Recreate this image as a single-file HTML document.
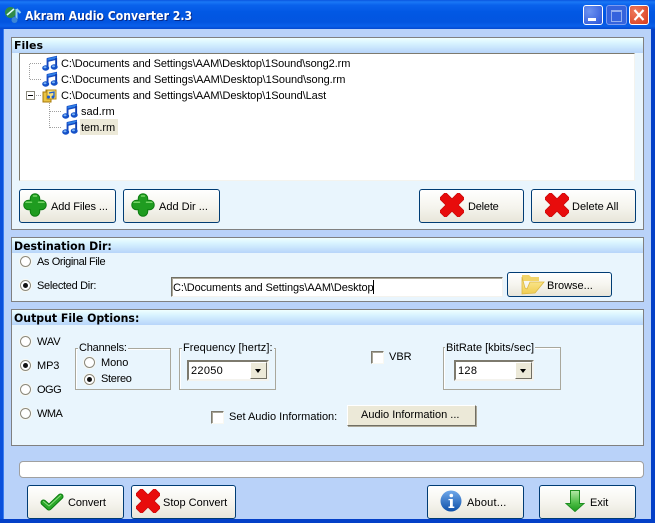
<!DOCTYPE html>
<html><head><meta charset="utf-8"><style>
html,body{margin:0;padding:0;background:#0a55e3}
#w{position:relative;width:655px;height:523px;overflow:hidden;background:#b9d2f9;font-family:"Liberation Sans",sans-serif;font-size:11px;color:#000}
#w div,#w span,#w svg{position:absolute}
.t{white-space:nowrap;line-height:13px;height:13px;margin-top:1px}
.panel{left:11px;width:631px;background:#e9f5fd;border:1px solid #808080}
.hd{left:0;top:0;width:631px;height:15px;background:linear-gradient(#f0ffff,#d8f3ff 35%,#b7d4fa)}
.hdt{left:2px;top:1px;font-weight:bold;font-family:"DejaVu Sans",sans-serif;font-size:11.5px;line-height:14px;white-space:nowrap;transform-origin:0 0;transform:scaleX(.95)}
.btn{box-sizing:border-box;height:34px;border:1px solid #003c74;border-radius:3px;background:linear-gradient(#fff,#f6f5ef 50%,#e8e6da)}
.rad{width:11px;height:11px;border-radius:50%;background:#fff;border:1px solid #8a887c;box-sizing:border-box;box-shadow:0 0 0 1px #f8f8f2}
.rad.on:after{content:"";position:absolute;left:2px;top:2px;width:5px;height:5px;border-radius:50%;background:#111}
.chk{width:11px;height:11px;background:#fff;border:1px solid;border-color:#7d7a6e #f8f8f2 #f8f8f2 #7d7a6e;box-shadow:inset 1px 1px 0 #a8a598}
.grp{border:1px solid #a9a79c;box-shadow:inset 1px 1px 0 #fff}
.lab{background:#e9f5fd;padding:0 1px}
.sel{background:#fff;border:2px solid;border-color:#7d7a6e #f4f3ee #f4f3ee #7d7a6e;box-sizing:border-box;height:21px}
.arr{right:0;top:0;width:17px;height:17px;background:#ece9d8;border:1px solid;border-color:#fff #716f64 #716f64 #fff;box-sizing:border-box}
.arr:after{content:"";position:absolute;left:4px;top:6px;border:3.5px solid transparent;border-top:4px solid #000;border-bottom:0}
.n{width:16px;height:16px}
</style></head><body><div id="w">
<svg width="0" height="0" style="left:0;top:0"><defs>
<symbol id="note" viewBox="0 0 16 16"><path d="M5 3 15 .8v4L6.500 6.800V13H4.600V3.500z" fill="#1448c0"/><path d="M5.500 3.500 14.500 1.500v2L5.500 5.500z" fill="#2f80e8"/><path d="M13.200 3h1.900v9h-1.900z" fill="#0f3fb0"/><ellipse cx="3.700" cy="13" rx="3.500" ry="2.700" fill="#1450c8"/><ellipse cx="12.200" cy="12" rx="3.500" ry="2.700" fill="#1450c8"/><ellipse cx="3" cy="12.300" rx="1.500" ry="1" fill="#7ab4f4"/><ellipse cx="11.500" cy="11.300" rx="1.500" ry="1" fill="#7ab4f4"/></symbol>
<symbol id="plus" viewBox="0 0 24 24"><path d="M12 5.500v13M5.500 12h13" fill="none" stroke="#0c7c10" stroke-width="10.500" stroke-linecap="round"/><path d="M12 5.500v13M5.500 12h13" fill="none" stroke="#1f9c20" stroke-width="8.500" stroke-linecap="round"/><path d="M10.500 3h3M3 9.300h5.500M15.500 9.300H21" fill="none" stroke="#74d466" stroke-width="1.500" stroke-linecap="round"/></symbol>
<symbol id="x" viewBox="0 0 24 24"><path d="M5.500 5.500 18.500 18.500M18.500 5.500 5.500 18.500" fill="none" stroke="#c80808" stroke-width="9.500" stroke-linecap="square"/><path d="M5.500 5.500 18.500 18.500M18.500 5.500 5.500 18.500" fill="none" stroke="#e80c0c" stroke-width="8" stroke-linecap="square"/></symbol>
</defs></svg>

<!-- title bar -->
<div style="left:0;top:0;width:655px;height:29px;background:linear-gradient(#0a55e0 0,#1a78f6 2px,#0a62ec 5px,#0258e4 12px,#0355e0 22px,#0a60ea 26px,#0448d0)"></div>
<div style="left:0;top:29px;width:3px;height:494px;background:#0a50dc"></div>
<div style="left:3px;top:29px;width:1px;height:490px;background:#3a7cf0"></div>
<div style="left:651px;top:29px;width:4px;height:494px;background:#0440c8"></div>
<div style="left:0;top:519px;width:655px;height:4px;background:#0440c8"></div>
<svg style="left:4px;top:6px" width="18" height="18" viewBox="0 0 18 18"><circle cx="6.500" cy="6.500" r="5.500" fill="#2f8a48"/><path d="M3 9 10 3" stroke="#dff" stroke-width="1.500"/><path d="M12.500 3v10" stroke="#8fd0f0" stroke-width="2"/><path d="M12.500 3l4 4" stroke="#8fd0f0" stroke-width="2"/><ellipse cx="10.500" cy="14" rx="3" ry="3" fill="#3c86d6"/></svg>
<div style="left:25px;top:9px;height:15px;line-height:15px;color:#062a8a;font:bold 12px 'DejaVu Sans',sans-serif;white-space:nowrap;transform-origin:0 0;transform:translate(1px,1px) scaleX(.91)">Akram Audio Converter 2.3</div>
<div style="left:25px;top:9px;height:15px;line-height:15px;color:#fff;font:bold 12px 'DejaVu Sans',sans-serif;white-space:nowrap;transform-origin:0 0;transform:scaleX(.91)">Akram Audio Converter 2.3</div>
<div style="left:583px;top:5px;width:20px;height:20px;box-sizing:border-box;border:1px solid #fff;border-radius:3px;background:radial-gradient(circle at 30% 30%,#6d93f0,#2a54d8)"></div>
<div style="left:588px;top:18px;width:8px;height:3px;background:#fff"></div>
<div style="left:606px;top:5px;width:21px;height:20px;box-sizing:border-box;border:1px solid #7d9cf0;border-radius:3px;background:#3563dd"></div>
<div style="left:611px;top:10px;width:9px;height:9px;border:1px solid #92aef0;border-top:2px solid #92aef0"></div>
<div style="left:629px;top:5px;width:20px;height:20px;box-sizing:border-box;border:1px solid #fff;border-radius:3px;background:radial-gradient(circle at 30% 30%,#ee7a5c,#d83a1c)"></div>
<svg style="left:633px;top:9px" width="12" height="12" viewBox="0 0 12 12"><path d="M1.500 1 10.500 11M10.500 1 1.500 11" stroke="#fff" stroke-width="2.200"/></svg>

<!-- Files -->
<div class="panel" style="top:37px;height:191px">
 <div class="hd"></div><div class="hdt" style="font-size:11px;top:1px;transform:none">Files</div>
</div>
<div style="left:19px;top:53px;width:614px;height:126px;background:#fff;border:1px solid;border-color:#7d7a6e #f4f3ee #f4f3ee #7d7a6e"></div>
<svg style="left:20px;top:54px" width="70" height="85"><g stroke="#a0a0a0" stroke-dasharray="1 1" fill="none"><path d="M9.500 10V26M10 9.500H22M10 25.500H22"/><path d="M29.500 47V74M30 57.500H42M30 73.500H42"/><path d="M14 41.500H22"/></g></svg>
<div style="left:26px;top:91px;width:9px;height:9px;box-sizing:border-box;border:1px solid #8a887c;background:#fff"></div>
<div style="left:28px;top:95px;width:5px;height:1px;background:#000"></div>
<svg class="n" style="left:42px;top:55px"><use href="#note"/></svg>
<svg class="n" style="left:42px;top:71px"><use href="#note"/></svg>
<svg class="n" style="left:42px;top:87px" viewBox="0 0 16 16"><path d="M1 5h3V3h10v9H9v3H1z" fill="#e9c344" stroke="#a87a0a"/><path d="M5 3h9v9H5z" fill="#f6df7c" stroke="#b58a14"/><path d="M7 6l5-1v5" fill="none" stroke="#1c5cd0" stroke-width="1.300"/><circle cx="6.500" cy="10" r="1.500" fill="#1c5cd0"/><circle cx="11" cy="10" r="1.500" fill="#1c5cd0"/></svg>
<svg class="n" style="left:62px;top:103px"><use href="#note"/></svg>
<svg class="n" style="left:62px;top:119px"><use href="#note"/></svg>
<div class="t" style="left:61px;top:57px;letter-spacing:-.09px">C:\Documents and Settings\AAM\Desktop\1Sound\song2.rm</div>
<div class="t" style="left:61px;top:73px;letter-spacing:-.07px">C:\Documents and Settings\AAM\Desktop\1Sound\song.rm</div>
<div class="t" style="left:61px;top:89px;letter-spacing:-.08px">C:\Documents and Settings\AAM\Desktop\1Sound\Last</div>
<div class="t" style="left:81px;top:105px">sad.rm</div>
<div style="left:80px;top:119px;width:38px;height:16px;background:#ece9d8"></div>
<div class="t" style="left:81px;top:121px">tem.rm</div>

<div class="btn" style="left:19px;top:189px;width:97px"></div>
<svg style="left:23px;top:193px" width="24" height="24"><use href="#plus"/></svg>
<div class="t" style="left:51px;top:200px;letter-spacing:-.1px">Add Files ...</div>
<div class="btn" style="left:123px;top:189px;width:97px"></div>
<svg style="left:131px;top:193px" width="24" height="24"><use href="#plus"/></svg>
<div class="t" style="left:159px;top:200px">Add Dir ...</div>
<div class="btn" style="left:419px;top:189px;width:105px"></div>
<svg style="left:440px;top:193px" width="24" height="24"><use href="#x"/></svg>
<div class="t" style="left:468px;top:200px;letter-spacing:-.2px">Delete</div>
<div class="btn" style="left:531px;top:189px;width:105px"></div>
<svg style="left:545px;top:193px" width="24" height="24"><use href="#x"/></svg>
<div class="t" style="left:572px;top:200px">Delete All</div>

<!-- Destination -->
<div class="panel" style="top:237px;height:63px">
 <div class="hd"></div><div class="hdt">Destination Dir:</div>
</div>
<div class="rad" style="left:20px;top:256px"></div>
<div class="t" style="left:37px;top:255px;letter-spacing:-.4px">As Original File</div>
<div class="rad on" style="left:20px;top:280px"></div>
<div class="t" style="left:37px;top:279px;letter-spacing:-.3px">Selected Dir:</div>
<div style="left:171px;top:277px;width:332px;height:20px;box-sizing:border-box;background:#fff;border:1px solid;border-color:#716f64 #f4f3ee #f4f3ee #716f64;box-shadow:inset 1px 1px 0 #aca899"></div>
<div class="t" style="left:173px;top:281px;letter-spacing:-.1px">C:\Documents and Settings\AAM\Desktop</div>
<div style="left:373px;top:280px;width:1px;height:14px;background:#000"></div>
<div class="btn" style="left:507px;top:272px;width:105px;height:25px"></div>
<svg style="left:521px;top:274px" width="24" height="21" viewBox="0 0 24 21"><defs><linearGradient id="fo" x1="0" y1="0" x2="0" y2="1"><stop offset="0" stop-color="#fdeea0"/><stop offset="1" stop-color="#f0cc50"/></linearGradient></defs><path d="M1 1h7l2 2h8v4H1z" fill="#f2d468"/><path d="M1 3v17l13-1 9-11-14 0-3 7-2-1z" fill="url(#fo)" stroke="#dcb840" stroke-width=".8"/></svg>
<div class="t" style="left:547px;top:279px">Browse...</div>

<!-- Output -->
<div class="panel" style="top:309px;height:135px">
 <div class="hd"></div><div class="hdt">Output File Options:</div>
</div>
<div class="rad" style="left:20px;top:336px"></div><div class="t" style="left:37px;top:335px;letter-spacing:-.1px">WAV</div>
<div class="rad on" style="left:20px;top:360px"></div><div class="t" style="left:37px;top:359px;letter-spacing:-.1px">MP3</div>
<div class="rad" style="left:20px;top:384px"></div><div class="t" style="left:37px;top:383px;letter-spacing:-.5px">OGG</div>
<div class="rad" style="left:20px;top:408px"></div><div class="t" style="left:37px;top:407px;letter-spacing:-.5px">WMA</div>

<div class="grp" style="left:75px;top:348px;width:94px;height:40px"></div>
<div class="t lab" style="left:78px;top:341px;letter-spacing:-.2px">Channels:</div>
<div class="rad" style="left:84px;top:357px"></div><div class="t" style="left:101px;top:356px;letter-spacing:-.05px">Mono</div>
<div class="rad on" style="left:84px;top:374px"></div><div class="t" style="left:101px;top:372px;letter-spacing:-.3px">Stereo</div>

<div class="grp" style="left:179px;top:348px;width:95px;height:40px"></div>
<div class="t lab" style="left:182px;top:341px;letter-spacing:.05px">Frequency [hertz]:</div>
<div class="sel" style="left:187px;top:360px;width:82px"><div class="arr"></div></div>
<div class="t" style="left:191px;top:364px;letter-spacing:.3px">22050</div>

<div class="chk" style="left:371px;top:351px"></div>
<div class="t" style="left:389px;top:350px">VBR</div>

<div class="grp" style="left:443px;top:347px;width:116px;height:41px"></div>
<div class="t lab" style="left:445px;top:341px;letter-spacing:0">BitRate [kbits/sec]</div>
<div class="sel" style="left:454px;top:360px;width:80px"><div class="arr"></div></div>
<div class="t" style="left:458px;top:364px;letter-spacing:.3px">128</div>

<div class="chk" style="left:211px;top:411px"></div>
<div class="t" style="left:229px;top:410px">Set Audio Information:</div>
<div style="left:347px;top:405px;width:129px;height:21px;box-sizing:border-box;background:#ece9d8;border:1px solid;border-color:#fff #716f64 #716f64 #fff;box-shadow:1px 1px 0 #aca899"></div>
<div class="t" style="left:361px;top:408px">Audio Information ...</div>

<!-- Progress -->
<div style="left:19px;top:461px;width:625px;height:17px;box-sizing:border-box;background:#fff;border:1px solid #a0a0a0;border-radius:4px"></div>

<!-- Bottom buttons -->
<div class="btn" style="left:27px;top:485px;width:97px"></div>
<svg style="left:40px;top:493px" width="24" height="18" viewBox="0 0 24 18"><path d="M3.500 9.500 9 14.500 20.500 3.500" fill="none" stroke="#0a7a0e" stroke-width="6" stroke-linecap="round" stroke-linejoin="round"/><path d="M3.500 9.500 9 14.500 20.500 3.500" fill="none" stroke="#2aa82a" stroke-width="4" stroke-linecap="round" stroke-linejoin="round"/><path d="M3.500 8.500 9 13 20.500 2.500" fill="none" stroke="#8adc7c" stroke-width="1" stroke-linecap="round"/></svg>
<div class="t" style="left:68px;top:496px;letter-spacing:-.1px">Convert</div>
<div class="btn" style="left:131px;top:485px;width:105px"></div>
<svg style="left:136px;top:489px" width="24" height="24"><use href="#x"/></svg>
<div class="t" style="left:163px;top:496px">Stop Convert</div>
<div class="btn" style="left:427px;top:485px;width:97px"></div>
<svg style="left:440px;top:490px" width="22" height="22" viewBox="0 0 22 22"><defs><linearGradient id="ab" x1="0" y1="0" x2="0" y2="1"><stop offset="0" stop-color="#6fa8ea"/><stop offset="1" stop-color="#0e50a8"/></linearGradient></defs><circle cx="11" cy="11" r="10.500" fill="url(#ab)"/><circle cx="11.300" cy="5.500" r="1.800" fill="#fff"/><path d="M8.500 9h4.300v7.500h1.500V18H8.500v-1.500h1.500V10.300H8.500z" fill="#fff"/></svg>
<div class="t" style="left:467px;top:496px;letter-spacing:.2px">About...</div>
<div class="btn" style="left:539px;top:485px;width:97px"></div>
<svg style="left:565px;top:490px" width="20" height="22" viewBox="0 0 20 22"><defs><linearGradient id="ex" x1="0" y1="0" x2="0" y2="1"><stop offset="0" stop-color="#b4e8a8"/><stop offset=".6" stop-color="#4cbc44"/><stop offset="1" stop-color="#1c9a1e"/></linearGradient></defs><path d="M5.500 .5h9v13H19l-9 8-9-8h4.500z" fill="url(#ex)" stroke="#1f8f22"/></svg>
<div class="t" style="left:590px;top:496px">Exit</div>
</div></body></html>
